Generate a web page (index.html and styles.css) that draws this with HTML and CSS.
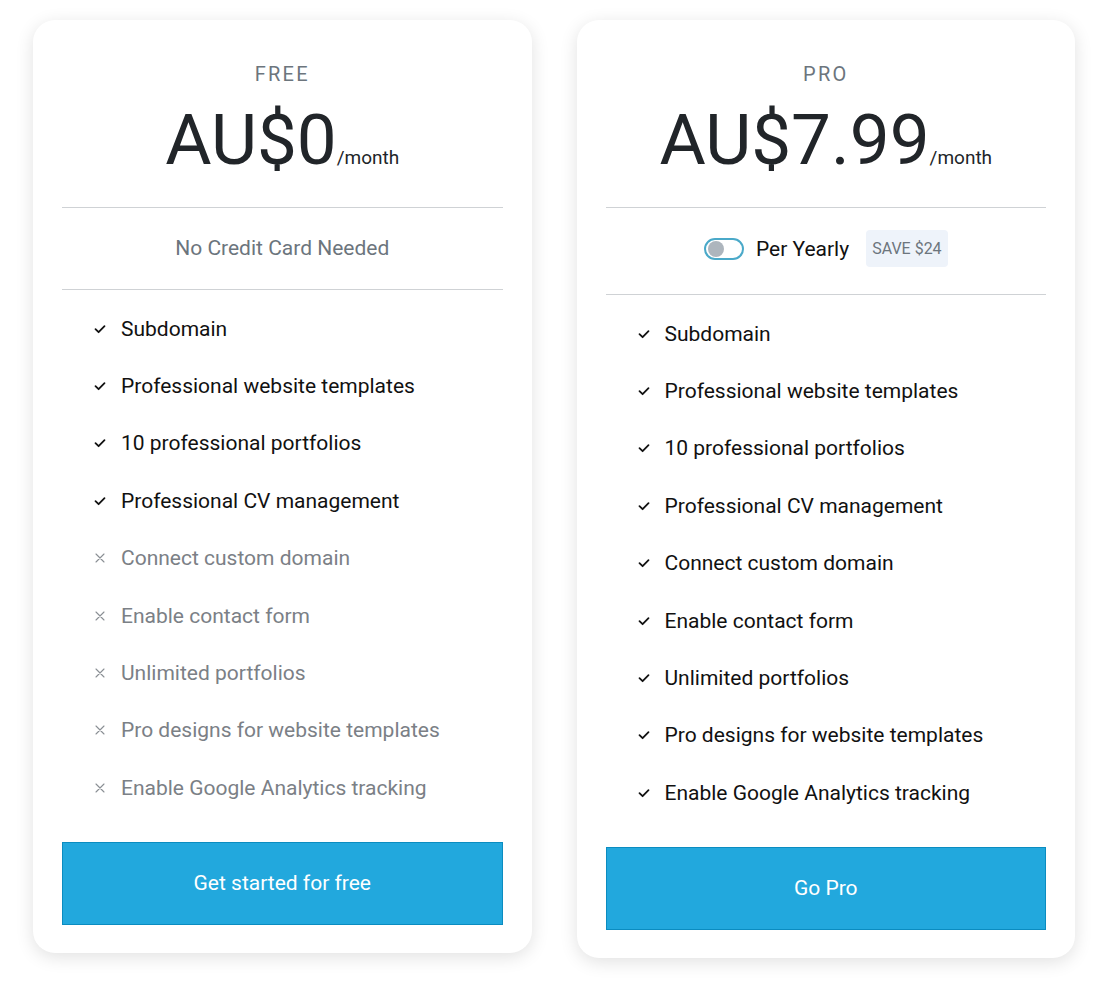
FILE: index.html
```html
<!DOCTYPE html>
<html>
<head>
    <meta charset="UTF-8">
    <meta name="viewport" content="width=device-width, initial-scale=1.0">
    <title>Pricing</title>
    <link rel="stylesheet" href="styles.css">
</head>
<body>
    <div class="plans">
        <!-- Free plan -->
        <div class="plan-card">
            <div class="plan-name">FREE</div>
            <div class="plan-price"><span class="amount">AU$0</span><span class="period">/month</span></div>
            <div class="plan-note">No Credit Card Needed</div>
            <ul class="feature-list">
                <li class="yes"><svg class="icon" viewBox="0 0 12 12"><path d="M1.5 6.2 L4.6 9.2 L10.5 3.2"/></svg>Subdomain</li>
                <li class="yes"><svg class="icon" viewBox="0 0 12 12"><path d="M1.5 6.2 L4.6 9.2 L10.5 3.2"/></svg>Professional website templates</li>
                <li class="yes"><svg class="icon" viewBox="0 0 12 12"><path d="M1.5 6.2 L4.6 9.2 L10.5 3.2"/></svg>10 professional portfolios</li>
                <li class="yes"><svg class="icon" viewBox="0 0 12 12"><path d="M1.5 6.2 L4.6 9.2 L10.5 3.2"/></svg>Professional CV management</li>
                <li class="no"><svg class="icon" viewBox="0 0 12 12"><path d="M2 2 L10 10 M10 2 L2 10"/></svg>Connect custom domain</li>
                <li class="no"><svg class="icon" viewBox="0 0 12 12"><path d="M2 2 L10 10 M10 2 L2 10"/></svg>Enable contact form</li>
                <li class="no"><svg class="icon" viewBox="0 0 12 12"><path d="M2 2 L10 10 M10 2 L2 10"/></svg>Unlimited portfolios</li>
                <li class="no"><svg class="icon" viewBox="0 0 12 12"><path d="M2 2 L10 10 M10 2 L2 10"/></svg>Pro designs for website templates</li>
                <li class="no"><svg class="icon" viewBox="0 0 12 12"><path d="M2 2 L10 10 M10 2 L2 10"/></svg>Enable Google Analytics tracking</li>
            </ul>
            <button class="plan-button">Get started for free</button>
        </div>

        <!-- Pro plan -->
        <div class="plan-card">
            <div class="plan-name">PRO</div>
            <div class="plan-price"><span class="amount">AU$7.99</span><span class="period">/month</span></div>
            <div class="plan-note billing">
                <span class="toggle"><span class="knob"></span></span>
                <span class="billing-label">Per Yearly</span>
                <span class="save-badge">SAVE $24</span>
            </div>
            <ul class="feature-list">
                <li class="yes"><svg class="icon" viewBox="0 0 12 12"><path d="M1.5 6.2 L4.6 9.2 L10.5 3.2"/></svg>Subdomain</li>
                <li class="yes"><svg class="icon" viewBox="0 0 12 12"><path d="M1.5 6.2 L4.6 9.2 L10.5 3.2"/></svg>Professional website templates</li>
                <li class="yes"><svg class="icon" viewBox="0 0 12 12"><path d="M1.5 6.2 L4.6 9.2 L10.5 3.2"/></svg>10 professional portfolios</li>
                <li class="yes"><svg class="icon" viewBox="0 0 12 12"><path d="M1.5 6.2 L4.6 9.2 L10.5 3.2"/></svg>Professional CV management</li>
                <li class="yes"><svg class="icon" viewBox="0 0 12 12"><path d="M1.5 6.2 L4.6 9.2 L10.5 3.2"/></svg>Connect custom domain</li>
                <li class="yes"><svg class="icon" viewBox="0 0 12 12"><path d="M1.5 6.2 L4.6 9.2 L10.5 3.2"/></svg>Enable contact form</li>
                <li class="yes"><svg class="icon" viewBox="0 0 12 12"><path d="M1.5 6.2 L4.6 9.2 L10.5 3.2"/></svg>Unlimited portfolios</li>
                <li class="yes"><svg class="icon" viewBox="0 0 12 12"><path d="M1.5 6.2 L4.6 9.2 L10.5 3.2"/></svg>Pro designs for website templates</li>
                <li class="yes"><svg class="icon" viewBox="0 0 12 12"><path d="M1.5 6.2 L4.6 9.2 L10.5 3.2"/></svg>Enable Google Analytics tracking</li>
            </ul>
            <button class="plan-button">Go Pro</button>
        </div>
    </div>
</body>
</html>
```

FILE: styles.css
```css
/* Page */
body {
    font-family: Roboto, "Liberation Sans", sans-serif;
    background-color: #ffffff;
    color: #212529;
    margin: 0;
}

.plans {
    display: flex;
    align-items: flex-start;
    gap: 45px;
    padding: 20px 33px;
}

/* Cards */
.plan-card {
    width: 499px;
    box-sizing: border-box;
    background-color: #ffffff;
    border-radius: 22px;
    box-shadow: 0 4px 18px rgba(0, 0, 0, 0.12);
    padding: 42px 29px 28px;
}

.plan-name {
    text-align: center;
    font-size: 20px;
    line-height: 24px;
    letter-spacing: 2.2px;
    color: #6c757d;
}

.plan-price {
    margin-top: 10px;
    text-align: center;
    font-size: 71px;
    line-height: 88px;
    height: 88px;
    padding-bottom: 23px;
    border-bottom: 1px solid #cfd2d5;
}

.amount {
    color: #212529;
}

.period {
    font-size: 19px;
}

/* Note row */
.plan-note {
    text-align: center;
    font-size: 21px;
    line-height: 24px;
    color: #6c757d;
    padding: 28px 0 29px;
    border-bottom: 1px solid #cfd2d5;
}

.billing {
    display: flex;
    justify-content: center;
    align-items: center;
    padding: 22px 0 27px;
}

.toggle {
    width: 40px;
    height: 22px;
    box-sizing: border-box;
    border: 2px solid #4aa9c9;
    border-radius: 11px;
    display: flex;
    align-items: center;
    padding-left: 2px;
}

.knob {
    width: 16px;
    height: 16px;
    border-radius: 50%;
    background-color: #adb5bd;
}

.billing-label {
    color: #111111;
    margin-left: 12px;
}

.save-badge {
    margin-left: 17px;
    height: 37px;
    line-height: 37px;
    padding: 0 6px;
    background-color: #eef3fa;
    border-radius: 4px;
    font-size: 16px;
    color: #6c757d;
}

/* Features */
.feature-list {
    list-style: none;
    margin: 0;
    padding: 10px 0 0 32px;
}

.feature-list li {
    display: flex;
    align-items: center;
    height: 57.4px;
    font-size: 21px;
}

.icon {
    width: 12px;
    height: 12px;
    margin-right: 15px;
    fill: none;
    stroke-linecap: round;
    stroke-linejoin: round;
}

.yes {
    color: #111111;
}

.yes .icon {
    stroke: #111111;
    stroke-width: 1.8;
}

.no {
    color: #7b8086;
}

.no .icon {
    stroke: #8a8f94;
    stroke-width: 1.1;
}

/* Button */
.plan-button {
    display: block;
    width: 100%;
    height: 83px;
    margin-top: 25px;
    background-color: #22a8dd;
    border: 1px solid #0b8cc0;
    color: #ffffff;
    font-family: Roboto, "Liberation Sans", sans-serif;
    font-size: 21px;
    cursor: pointer;
}
```
